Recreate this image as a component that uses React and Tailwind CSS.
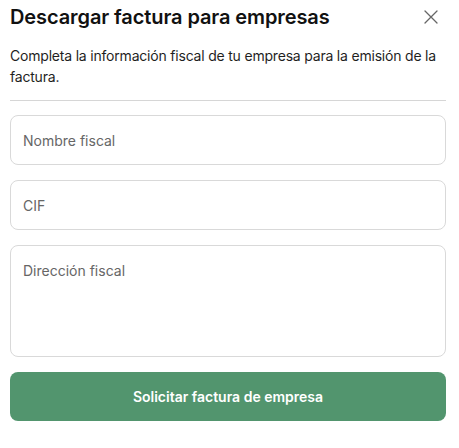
import React from "react";

export default function App() {
  return (
    <div
      className="w-[459px] h-[448px] bg-white pl-[10px] pr-[13px] pt-[3px]"
      style={{ fontFamily: "Inter, 'Liberation Sans', sans-serif" }}
    >
      <div className="flex items-center justify-between h-[28px]">
        <h1 className="text-[20px] leading-[28px] font-semibold text-[#111111] tracking-[-0.1px]">
          Descargar factura para empresas
        </h1>
        <button className="mr-[7px] flex items-center justify-center w-[16px] h-[16px]">
          <svg width="14" height="14" viewBox="0 0 14 14" fill="none">
            <path d="M1 1L13 13M13 1L1 13" stroke="#666666" strokeWidth="1.3" strokeLinecap="round" />
          </svg>
        </button>
      </div>
      <p className="mt-[14px] text-[14px] leading-[21px] text-[#1f1f1f] tracking-[-0.2px]">
        Completa la información fiscal de tu empresa para la emisión de la factura.
      </p>
      <div className="mt-[13px] h-px bg-[#d6d6d6]" />
      <div className="mt-[14px] flex flex-col gap-[15px]">
        <input
          placeholder="Nombre fiscal"
          className="h-[50px] w-full rounded-[8px] border border-[#d9d9d9] px-[12px] text-[14px] text-[#222] placeholder:text-[#666666] outline-none"
        />
        <input
          placeholder="CIF"
          className="h-[50px] w-full rounded-[8px] border border-[#d9d9d9] px-[12px] text-[14px] text-[#222] placeholder:text-[#666666] outline-none"
        />
        <textarea
          placeholder="Dirección fiscal"
          className="h-[112px] w-full resize-none rounded-[8px] border border-[#d9d9d9] px-[12px] pt-[15px] text-[14px] leading-[20px] text-[#222] placeholder:text-[#666666] outline-none"
        />
        <button className="h-[49px] w-full rounded-[8px] bg-[#52956e] text-[14px] font-semibold text-white">
          Solicitar factura de empresa
        </button>
      </div>
    </div>
  );
}
